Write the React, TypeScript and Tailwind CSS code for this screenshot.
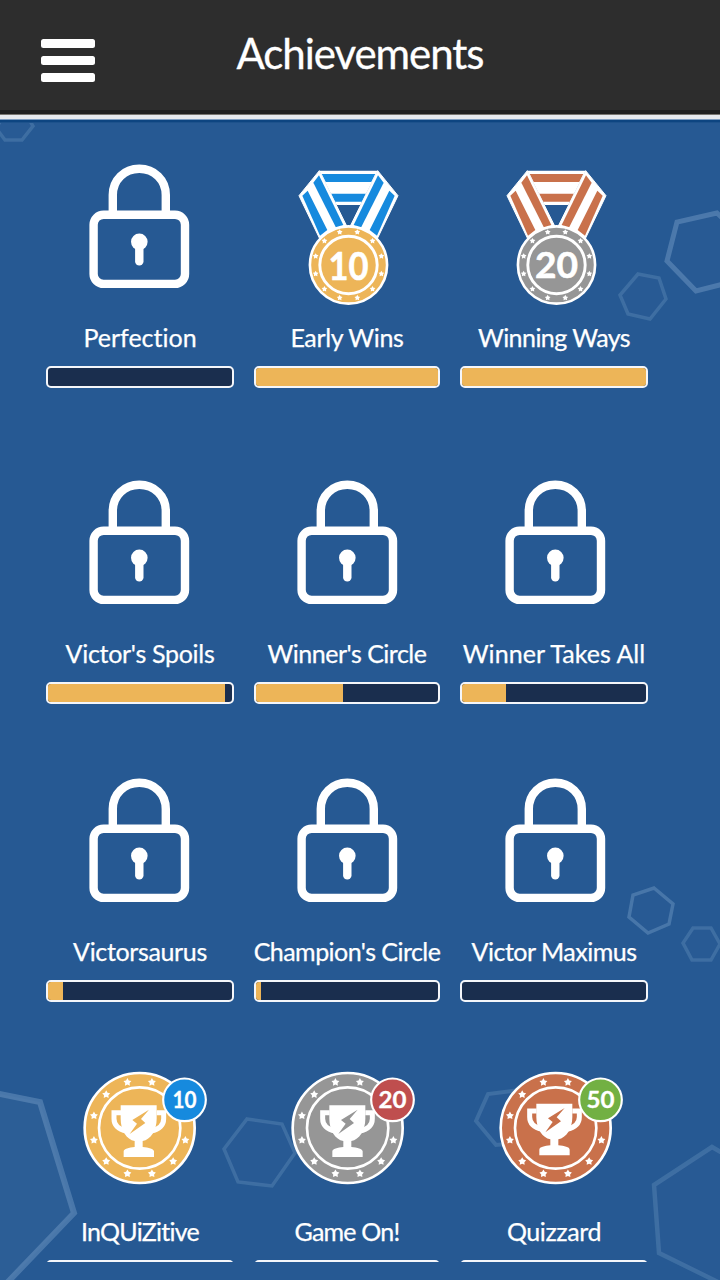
import type { ReactNode } from 'react';
import clsx from 'clsx';

const GOLD = '#edb558';
const SILVER = '#969696';
const BRONZE = '#c9714b';
const BLUE = '#168ade';

type Achievement = {
    title: string;
    tracking: string;
    progress: number;
    icon: ReactNode;
};

function Star({ cx, cy, r }: { cx: number; cy: number; r: number }) {
    const points = Array.from({ length: 10 }, (_, i) => {
        const a = (Math.PI / 5) * i - Math.PI / 2;
        const d = i % 2 === 0 ? r : r * 0.55;
        return `${(cx + d * Math.cos(a)).toFixed(2)},${(cy + d * Math.sin(a)).toFixed(2)}`;
    });
    return <polygon points={points.join(' ')} fill="#fff" />;
}

function StarRing({ cx, cy, radius, size }: { cx: number; cy: number; radius: number; size: number }) {
    return (
        <g>
            {Array.from({ length: 12 }, (_, i) => {
                const a = ((15 + i * 30) * Math.PI) / 180;
                return (
                    <Star key={i} cx={cx + radius * Math.cos(a)} cy={cy + radius * Math.sin(a)} r={size} />
                );
            })}
        </g>
    );
}

function Lock() {
    return (
        <svg width="140" height="144" viewBox="0 0 140 144" fill="none" stroke="#fff" strokeWidth="8.4">
            <path d="M43.8 50V31C43.8 15.8 55.4 4.7 70.3 4.7S96.8 15.8 96.8 31V50" />
            <rect x="24.6" y="50.7" width="91.4" height="69.2" rx="10" />
            <circle cx="70.3" cy="77.8" r="8.3" fill="#fff" stroke="none" />
            <path d="M70.3 78V97.4" strokeLinecap="round" />
        </svg>
    );
}

function Strap({ color }: { color: string }) {
    return (
        <g>
            <path d="M208 62L147 137L210 268L290 228Z" fill="#fff" stroke="#fff" strokeWidth="3" strokeLinejoin="round" />
            <path d="M157 137L173 122L232 240L210 257Z" fill={color} />
            <path d="M190 98L207 76L280 225L259 235Z" fill={color} />
        </g>
    );
}

function Medal({ value, ribbon, disc }: { value: number; ribbon: string; disc: string }) {
    const ten = value === 10;
    return (
        <svg width="140" height="144" viewBox="0 0 140 144">
            <g transform="translate(-27 -14) scale(0.33333)">
                <path d="M208 62H383L331 165H260Z" fill="#fff" />
                <path d="M215 72H376L364 96H227Z" fill={ribbon} />
                <path d="M243 131H348L336 155H255Z" fill={ribbon} />
                <Strap color={ribbon} />
                <g transform="translate(591 0) scale(-1 1)">
                    <Strap color={ribbon} />
                </g>
            </g>
            <circle cx="71.5" cy="101" r="38.6" fill={disc} stroke="#fff" strokeWidth="2.6" />
            <circle cx="71.5" cy="101" r="28.7" fill="none" stroke="#fff" strokeWidth="2.9" />
            <StarRing cx={71.5} cy={101} radius={34} size={3} />
            <text
                x="71.5"
                y={ten ? 116 : 113.5}
                textAnchor="middle"
                textLength={ten ? 40 : 43}
                lengthAdjust="spacingAndGlyphs"
                className={clsx('font-[Lato,sans-serif] font-bold', ten ? 'text-[39px]' : 'text-[36px]')}
                fill="#fff"
                stroke="#fff"
                strokeWidth="0.6"
            >
                {value}
            </text>
        </svg>
    );
}

function Trophy({ value, disc, badge, dx = 0, dy = 0 }: { value: number; disc: string; badge: string; dx?: number; dy?: number }) {
    return (
        <svg width="140" height="144" viewBox="0 0 140 144">
            <g transform="translate(-69 -8) scale(0.33333)">
                <circle cx="419" cy="234" r="165" fill={disc} stroke="#fff" strokeWidth="8" />
                <circle cx="419" cy="234" r="122" fill="none" stroke="#fff" strokeWidth="8" />
                <StarRing cx={419} cy={234} radius={142} size={12.5} />
                <g transform={`translate(${dx} ${dy})`}>
                    <path
                        d="M365 188H344V206C344 228 358 238 382 243M472 188H493V206C493 228 479 238 455 243"
                        fill="none"
                        stroke="#fff"
                        strokeWidth="15"
                    />
                    <path
                        d="M364 166H472V206C472 242 454 268 430 273V291C448 293 464 296 464 304V321H373V304C373 296 389 293 406 291V273C382 268 364 242 364 206Z"
                        fill="#fff"
                    />
                    <path d="M449 179L399 210L413 221L391 252L438 219L425 207Z" fill={disc} />
                </g>
                <circle cx="553.5" cy="149.5" r="64" fill={badge} stroke="#fff" strokeWidth="6.5" />
            </g>
            <text
                x="115.5"
                y="50"
                textAnchor="middle"
                textLength={value === 10 ? 24 : 28}
                lengthAdjust="spacingAndGlyphs"
                className="font-[Lato,sans-serif] text-[22.5px] font-bold"
                fill="#fff"
                stroke="#fff"
                strokeWidth="0.3"
            >
                {value}
            </text>
        </svg>
    );
}

const ROWS: { gap: string; items: Achievement[] }[] = [
    {
        gap: 'mb-[92px]',
        items: [
            { title: 'Perfection', tracking: 'tracking-normal', progress: 0, icon: <Lock /> },
            { title: 'Early Wins', tracking: 'tracking-[-0.35px]', progress: 100, icon: <Medal value={10} ribbon={BLUE} disc={GOLD} /> },
            { title: 'Winning Ways', tracking: 'tracking-[-0.55px]', progress: 100, icon: <Medal value={20} ribbon={BRONZE} disc={SILVER} /> },
        ],
    },
    {
        gap: 'mb-[74px]',
        items: [
            { title: "Victor's Spoils", tracking: 'tracking-[-0.3px]', progress: 96, icon: <Lock /> },
            { title: "Winner's Circle", tracking: 'tracking-[-0.5px]', progress: 48, icon: <Lock /> },
            { title: 'Winner Takes All', tracking: 'tracking-[0.05px]', progress: 24, icon: <Lock /> },
        ],
    },
    {
        gap: 'mb-[56px]',
        items: [
            { title: 'Victorsaurus', tracking: 'tracking-[-0.35px]', progress: 8, icon: <Lock /> },
            { title: "Champion's Circle", tracking: 'tracking-[-0.55px]', progress: 2.5, icon: <Lock /> },
            { title: 'Victor Maximus', tracking: 'tracking-[-0.5px]', progress: 0, icon: <Lock /> },
        ],
    },
    {
        gap: 'mb-0',
        items: [
            { title: 'InQUiZitive', tracking: 'tracking-[-0.75px]', progress: 0, icon: <Trophy value={10} disc={GOLD} badge={BLUE} dx={-2} /> },
            { title: 'Game On!', tracking: 'tracking-[-0.8px]', progress: 0, icon: <Trophy value={20} disc={SILVER} badge="#bf4e4e" /> },
            { title: 'Quizzard', tracking: 'tracking-[-0.4px]', progress: 0, icon: <Trophy value={50} disc={BRONZE} badge="#72b043" dx={-3} dy={-5} /> },
        ],
    },
];

// icons sit on a slightly wider pitch than the bars
const ICON_SHIFT = ['-ml-[2px]', 'ml-0', 'ml-[2px]'];

function AchievementCard({ item, column }: { item: Achievement; column: number }) {
    return (
        <div className="flex h-[224px] flex-col">
            <div className={clsx('flex h-[144px] justify-center', ICON_SHIFT[column])}>{item.icon}</div>
            <div className="flex h-[58px] items-center justify-center pt-px">
                <span
                    className={clsx(
                        'text-[25px] leading-none whitespace-nowrap [-webkit-text-stroke:0.25px_white] [font-variant-ligatures:none]',
                        item.tracking
                    )}
                >
                    {item.title}
                </span>
            </div>
            <div className="h-[22px] overflow-hidden rounded-[5px] border-2 border-[#f4f6fa] bg-[#1a2e4e]">
                <div className="h-full bg-[#edb558]" style={{ width: `${item.progress}%` }} />
            </div>
        </div>
    );
}

function Background() {
    return (
        <svg
            className="absolute inset-0"
            width="720"
            height="1280"
            viewBox="0 0 720 1280"
            fill="#fff"
            fillOpacity="0.012"
            stroke="#7fa5cd"
            strokeOpacity="0.27"
            strokeWidth="3.5"
        >
            <path d="M-4 128L5 140H22L33 126L26 114H5Z" />
            <path d="M717 213L677 222L667 261L696 291L735 281L748 242Z" strokeWidth="5" strokeOpacity="0.42" />
            <path d="M638 274L659 278L666 299L650 319L628 314L620 295Z" />
            <path d="M654 888L673 904L669 924L648 933L629 917L633 895Z" strokeOpacity="0.38" />
            <path d="M693 928H711L720 944L711 960H692L683 943Z" />
            <path d="M-20 1090L40 1102L74 1213L4 1286L-20 1290Z" fillOpacity="0.03" strokeWidth="6" strokeOpacity="0.4" />
            <path d="M247 1119L282 1124L295 1153L272 1186L238 1182L224 1149Z" />
            <path d="M520 1090L488 1094L476 1121L496 1145L530 1142Z" strokeWidth="4" />
            <path d="M712 1147L654 1185L659 1253L722 1284L770 1250V1180Z" strokeWidth="4.5" strokeOpacity="0.27" />
        </svg>
    );
}

export default function App() {
    return (
        <div className="relative flex h-[1280px] w-[720px] flex-col overflow-hidden bg-[#265993] font-[Lato,sans-serif] text-white">
            <Background />

            <header className="relative shrink-0">
                <div className="grid h-[110px] grid-cols-[1fr_auto_1fr] bg-[#2d2d2d]">
                    <div className="flex flex-col gap-2 pt-[39px] pl-[41px]">
                        <span className="h-[9px] w-[54px] rounded-[2.5px] bg-white" />
                        <span className="h-[9px] w-[54px] rounded-[2.5px] bg-white" />
                        <span className="h-[9px] w-[54px] rounded-[2.5px] bg-white" />
                    </div>
                    <h1 className="pt-8 text-[42px] leading-[42px] tracking-[-1.05px] [-webkit-text-stroke:0.3px_white]">
                        Achievements
                    </h1>
                </div>
                <div className="h-1 bg-[#1f1f1f]" />
                <div className="h-px bg-[#77746f]" />
                <div className="h-1 bg-[#e6e8ed]" />
                <div className="h-px bg-[#7d9cc0]" />
                <div className="h-[2px] bg-[#0d4581]" />
                <div className="h-px bg-[#1d528c]" />
            </header>

            <main className="relative mb-[18px] flex-1 overflow-hidden pt-[41px] pl-[46px]">
                {ROWS.map((row) => (
                    <div key={row.items[0].title} className={clsx('grid grid-cols-[188px_186px_188px] gap-x-5', row.gap)}>
                        {row.items.map((item, i) => (
                            <AchievementCard key={item.title} item={item} column={i} />
                        ))}
                    </div>
                ))}
            </main>
        </div>
    );
}
